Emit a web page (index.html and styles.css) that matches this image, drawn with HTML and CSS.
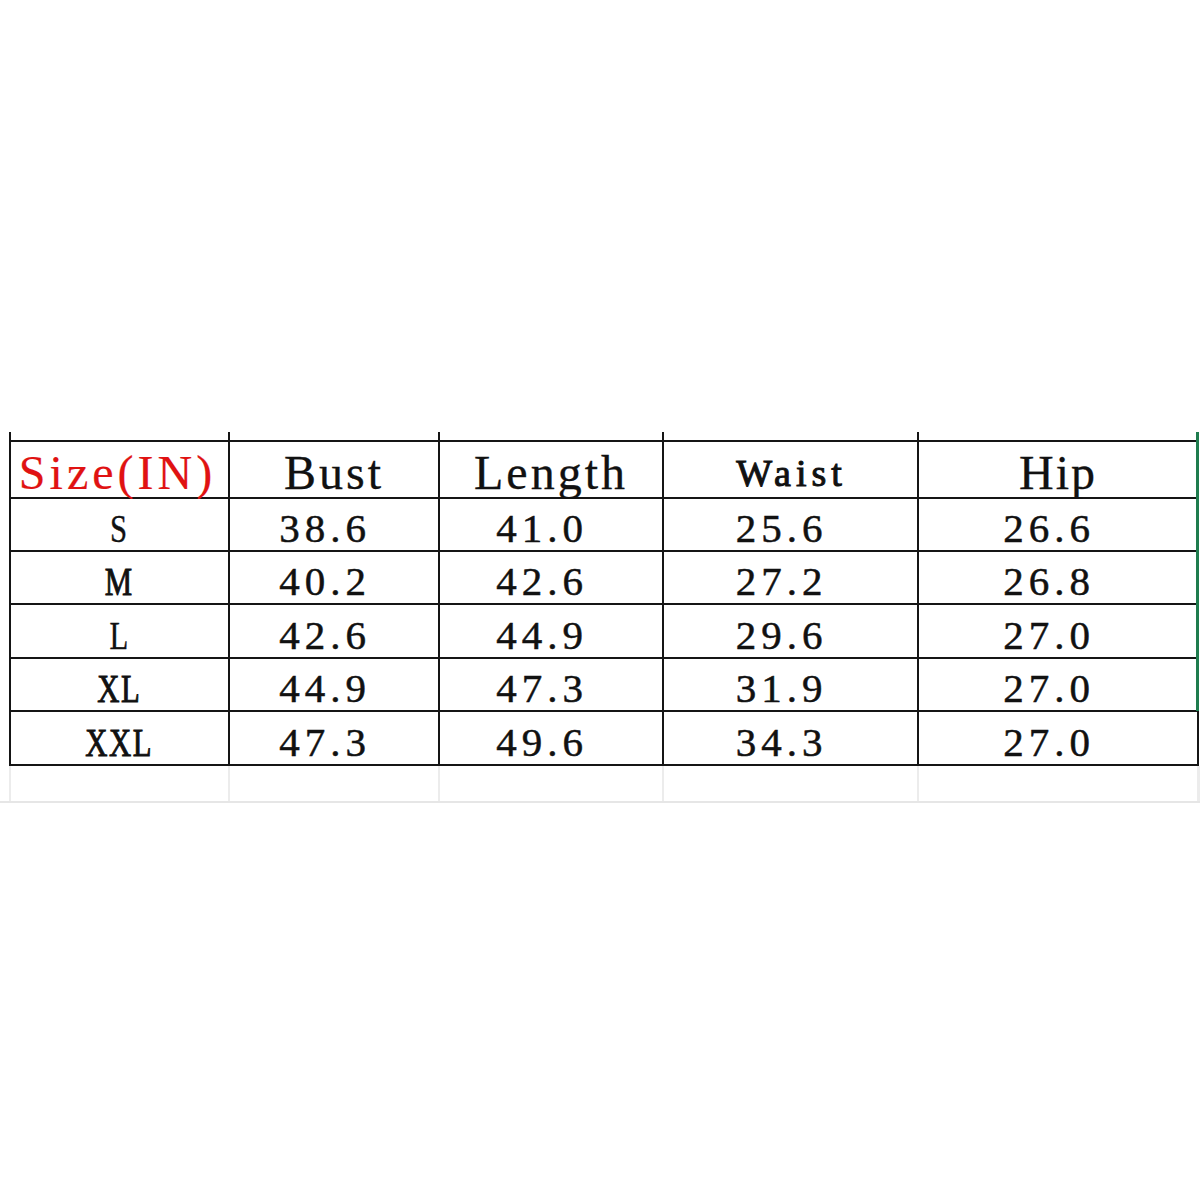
FILE: index.html
```html
<!DOCTYPE html>
<html>
<head>
<meta charset="utf-8">
<link rel="stylesheet" href="styles.css">
</head>
<body>
<div class="page">
  <div class="sheet">
    <div class="grid">
      <div class="stub"></div><div class="stub"></div><div class="stub"></div><div class="stub"></div><div class="stub"></div>

      <div class="cell head red">Size(IN)</div>
      <div class="cell head bust">Bust</div>
      <div class="cell head length">Length</div>
      <div class="cell head waist">Waist</div>
      <div class="cell head hip">Hip</div>

      <div class="cell size"><span class="sz">S</span></div>
      <div class="cell num">38.6</div><div class="cell num">41.0</div><div class="cell num">25.6</div><div class="cell num">26.6</div>

      <div class="cell size"><span class="sz bold">M</span></div>
      <div class="cell num">40.2</div><div class="cell num">42.6</div><div class="cell num">27.2</div><div class="cell num">26.8</div>

      <div class="cell size tall"><span class="sz">L</span></div>
      <div class="cell num tall">42.6</div><div class="cell num tall">44.9</div><div class="cell num tall">29.6</div><div class="cell num tall">27.0</div>

      <div class="cell size"><span class="sz bold">XL</span></div>
      <div class="cell num">44.9</div><div class="cell num">47.3</div><div class="cell num">31.9</div><div class="cell num">27.0</div>

      <div class="cell size tall"><span class="sz bold">XXL</span></div>
      <div class="cell num tall">47.3</div><div class="cell num tall">49.6</div><div class="cell num tall">34.3</div><div class="cell num tall">27.0</div>
    </div>
    <div class="green-edge"></div>
  </div>
  <div class="blank-wrap">
    <div class="blank">
      <div class="bcell"></div><div class="bcell"></div><div class="bcell"></div><div class="bcell"></div><div class="bcell"></div>
    </div>
  </div>
</div>
</body>
</html>
```

FILE: styles.css
```css
html, body {
  margin: 0;
  padding: 0;
  background: #fff;
}

.page {
  padding-top: 432px;
}

.sheet {
  position: relative;
  margin-left: 9px;
  width: 1190px;
}

.grid {
  display: grid;
  grid-template-columns: 217px 208px 222px 253px 278px;
  grid-template-rows: 8px 55px 51px 51px 52px 51px 52px;
  gap: 2px;
  padding: 0 2px 2px 2px;
  background: #151515;
}

.stub {
  background: #fff;
}

.cell {
  background: #fff;
  display: flex;
  align-items: center;
  justify-content: center;
  font-family: "Liberation Serif", "Times New Roman", serif;
  color: #111;
  line-height: 1;
}

.head {
  font-size: 48px;
  padding-top: 6px;
  -webkit-text-stroke: 0.3px #111;
}

.red {
  color: #e01212;
  -webkit-text-stroke: 0.2px #e01212;
  letter-spacing: 4px;
  padding-right: 4px;
}

.bust { letter-spacing: 3px; }
.length { letter-spacing: 3px; }
.hip { letter-spacing: 2px; }

.waist {
  font-size: 38px;
  font-weight: normal;
  -webkit-text-stroke: 1px #111;
  letter-spacing: 5px;
  padding-left: 2px;
}

.num {
  font-size: 41px;
  letter-spacing: 5px;
  padding-top: 8px;
  padding-right: 18px;
  -webkit-text-stroke: 0.5px #111;
}

.size {
  padding-top: 8px;
}

.sz {
  display: inline-block;
  font-size: 41px;
  transform: scaleX(0.75);
  letter-spacing: 2px;
  -webkit-text-stroke: 0.4px #111;
}

.sz.bold {
  -webkit-text-stroke: 1px #111;
}

.green-edge {
  position: absolute;
  right: 0;
  top: 0;
  width: 3px;
  height: 279px;
  background: #1e7c4e;
}

.blank-wrap {
  border-bottom: 2px solid #e6e6e6;
}

.blank {
  margin-left: 9px;
  width: 1190px;
  display: grid;
  grid-template-columns: 217px 208px 222px 253px 278px;
  grid-template-rows: 35px;
  gap: 2px;
  padding: 0 2px;
  background: #ececec;
}

.bcell {
  background: #fff;
}
```
